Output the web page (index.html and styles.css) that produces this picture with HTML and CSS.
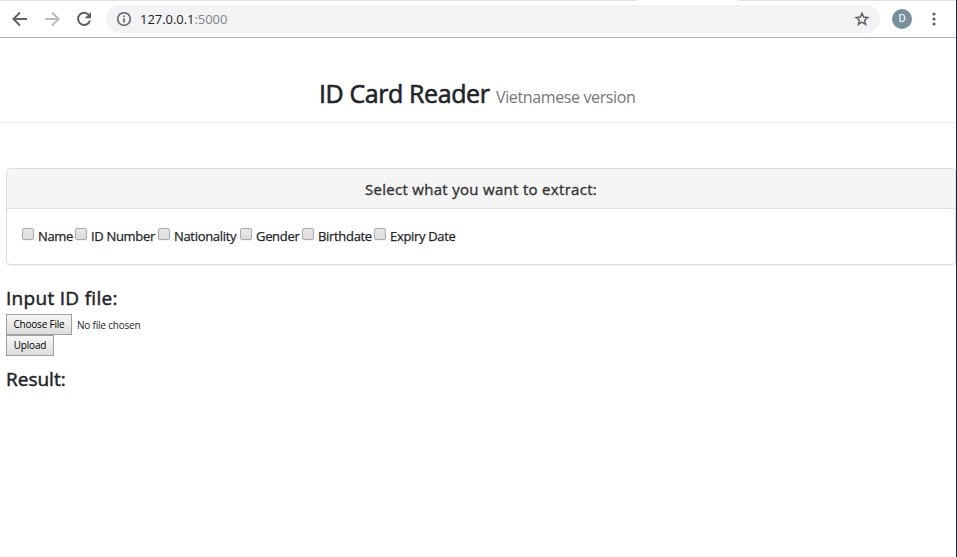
FILE: index.html
```html
<!DOCTYPE html>
<html lang="en">
<head>
<meta charset="utf-8">
<title>ID Card Reader</title>
<link rel="stylesheet" href="styles.css">
</head>
<body>
<div class="window">
  <header class="toolbar">
    <svg class="icon back" width="16" height="16" viewBox="0 0 16 16"><path d="M15 8H2M8 1.5 1.5 8 8 14.5"/></svg>
    <svg class="icon forward" width="16" height="16" viewBox="0 0 16 16"><path d="M1 8H14M8 1.5 14.5 8 8 14.5"/></svg>
    <svg class="icon reload" width="16" height="16" viewBox="0 0 16 16"><path d="M13.2 4.3A6.1 6.1 0 1 0 14 9.6"/><path class="solid" d="M15 1V7.3H8.7Z"/></svg>
    <div class="address">
      <svg class="icon info" width="16" height="16" viewBox="0 0 16 16"><circle cx="8" cy="8" r="6.3"/><path d="M8 7.2V11.5M8 4.4V6"/></svg>
      <span class="url">127.0.0.1<span class="port">:5000</span></span>
      <svg class="icon star" width="16" height="16" viewBox="0 0 16 16"><path d="M8 2.3 9.6 6.1 13.8 6.5 10.6 9.2 11.6 13.3 8 11.1 4.4 13.3 5.4 9.2 2.2 6.5 6.4 6.1Z"/></svg>
    </div>
    <span class="avatar">D</span>
    <svg class="dots" width="4" height="14" viewBox="0 0 4 14"><circle cx="2" cy="2" r="1.6"/><circle cx="2" cy="7" r="1.6"/><circle cx="2" cy="12" r="1.6"/></svg>
  </header>
  <main>
    <div class="page-header"><h1><span class="title">ID Card Reader</span><small>Vietnamese version</small></h1></div>
    <section class="panel">
      <div class="panel-heading"><span>Select what you want to extract:</span></div>
      <div class="panel-body">
        <label><input type="checkbox"><span>Name</span></label>
        <label><input type="checkbox"><span>ID Number</span></label>
        <label><input type="checkbox"><span>Nationality</span></label>
        <label><input type="checkbox"><span>Gender</span></label>
        <label><input type="checkbox"><span>Birthdate</span></label>
        <label><input type="checkbox"><span>Expiry Date</span></label>
      </div>
    </section>
    <section class="upload">
      <h2 class="input-title"><span>Input ID file:</span></h2>
      <div class="file-row"><button class="choose">Choose File</button><span class="file-name">No file chosen</span></div>
      <button class="send">Upload</button>
      <h2 class="result-title"><span>Result:</span></h2>
    </section>
  </main>
</div>
</body>
</html>
```
FILE: styles.css
```css
* { box-sizing: border-box; }
body { margin: 0; background: #fff; color: #212529; font-family: "Open Sans", "Noto Sans", sans-serif; }
.window { height: 557px; border-right: 1px solid #14273a; overflow: hidden; }
.toolbar {
  height: 38px; display: flex; align-items: center; padding: 0 20px 0 12px;
  border-bottom: 1px solid #b0b0b0;
  background: linear-gradient(90deg, #dee1e6 637px, #fff 637px 738px, #dee1e6 738px) top / 100% 1px no-repeat;
}
.icon { fill: none; stroke: #5f6368; stroke-width: 2; flex: none; }
.forward { margin-left: 16px; stroke: #bbbcbe; }
.reload { margin-left: 16px; }
.solid { fill: #5f6368; stroke: none; }
.address { width: 774px; height: 28px; margin-left: 14px; padding: 0 10px; border-radius: 14px; background: #f1f3f4; display: flex; align-items: center; }
.info { stroke-width: 1.6; }
.url { margin-left: 8px; font-size: 13px; line-height: 20px; color: #202124; letter-spacing: -.05px; white-space: nowrap; }
.port { color: #80868b; }
.star { margin-left: auto; stroke-width: 1.5; }
.avatar { width: 20px; height: 20px; margin-left: 12px; border-radius: 50%; background: #78909c; color: #fff; font: 400 11px/20px Roboto, sans-serif; text-align: center; }
.dots { fill: #5f6368; margin-left: auto; }
.page-header { height: 85px; border-bottom: 1px solid #eee; padding: 36px 0 0 319px; }
h1, h2 { margin: 0; font-weight: 400; white-space: nowrap; }
h1 { display: flex; align-items: baseline; line-height: 38px; }
.title { width: 177px; font-size: 25px; letter-spacing: -.4px; -webkit-text-stroke: .6px; }
small { font-size: 16px; color: #777; letter-spacing: -.37px; }
.panel { height: 97px; margin: 45px 0 0 6px; border: 1px solid #ddd; border-radius: 4px; box-shadow: 0 1px 1px rgba(0,0,0,.05); overflow: hidden; }
.panel-heading { height: 40px; border-bottom: 1px solid #ddd; background: #f5f5f5; color: #333; font-size: 15px; line-height: 41px; letter-spacing: .3px; text-align: center; white-space: nowrap; -webkit-text-stroke: .35px; }
.panel-body { display: grid; grid-template-columns: 53px 83px 82px 62px 72px auto; padding: 17px 15px 0; }
label { display: flex; align-items: flex-start; font-size: 13px; line-height: 20px; letter-spacing: -.32px; white-space: nowrap; -webkit-text-stroke: .25px; }
input { appearance: none; flex: none; width: 12px; height: 12px; margin: 2px 4px 0 0; border: 1px solid #aaa; border-radius: 2px; background: linear-gradient(#e8e8e8, #dcdcdc); box-shadow: 0 1px 1px rgba(0,0,0,.06); }
.upload { padding: 21px 0 0 6px; }
h2 { font-size: 19px; line-height: 24px; -webkit-text-stroke: .5px; }
.input-title { letter-spacing: .3px; }
.file-row { display: flex; margin-top: 4px; height: 21px; align-items: center; }
button { display: block; height: 21px; margin: 0; padding: 0; border: 1px solid #a0a0a0; background: linear-gradient(#f6f6f6, #ddd); color: #000; font: 10px/19px "Open Sans", sans-serif; letter-spacing: -.2px; text-align: center; white-space: nowrap; }
.choose { width: 66px; }
.send { width: 48px; }
.file-name { margin-left: 5px; font-size: 10px; line-height: 20px; letter-spacing: -.2px; }
.result-title { margin-top: 11px; }
```
